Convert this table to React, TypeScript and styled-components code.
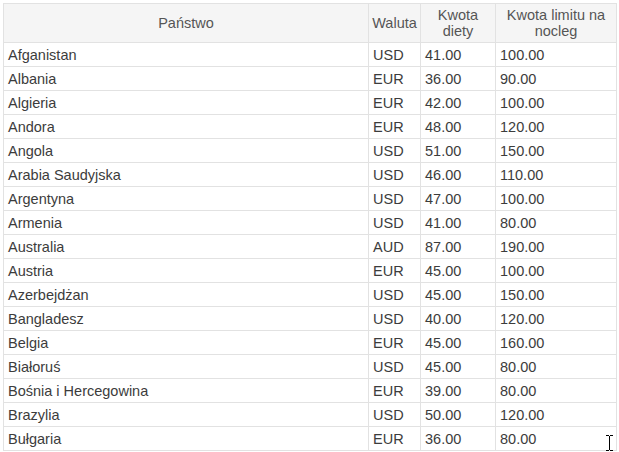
import React from "react";
import styled, { createGlobalStyle } from "styled-components";

const Global = createGlobalStyle`
  html, body { margin: 0; padding: 0; background: #fff; }
  body { font-family: "Liberation Sans", Arial, sans-serif; overflow: hidden; }
`;

const Page = styled.div`
  position: relative;
  padding: 3px 0 0 3px;
  width: 619px;
  height: 452px;
  box-sizing: border-box;
  overflow: hidden;
`;

const Table = styled.table`
  border-collapse: collapse;
  table-layout: fixed;
  width: 613px;
  font-size: 14.5px;
  color: #3c3c3c;
`;

const HeadCell = styled.th<{ $w: number }>`
  width: ${(p) => p.$w}px;
  height: 39px;
  padding: 0 2px;
  background: #f5f5f5;
  border: 1px solid #e2e2e2;
  font-weight: normal;
  color: #555;
  text-align: center;
  vertical-align: middle;
  line-height: 16px;
  box-sizing: border-box;
`;

const Cell = styled.td`
  height: 23px;
  padding: 1px 4px 0 4px;
  box-sizing: border-box;
  border: 1px solid #e2e2e2;
  white-space: nowrap;
  overflow: hidden;
  line-height: 22px;
  color: #3c3c3c;
`;

const Cursor = styled.svg`
  position: absolute;
  left: 605px;
  top: 435px;
`;

const rows: [string, string, string, string][] = [
  ["Afganistan", "USD", "41.00", "100.00"],
  ["Albania", "EUR", "36.00", "90.00"],
  ["Algieria", "EUR", "42.00", "100.00"],
  ["Andora", "EUR", "48.00", "120.00"],
  ["Angola", "USD", "51.00", "150.00"],
  ["Arabia Saudyjska", "USD", "46.00", "110.00"],
  ["Argentyna", "USD", "47.00", "100.00"],
  ["Armenia", "USD", "41.00", "80.00"],
  ["Australia", "AUD", "87.00", "190.00"],
  ["Austria", "EUR", "45.00", "100.00"],
  ["Azerbejdżan", "USD", "45.00", "150.00"],
  ["Bangladesz", "USD", "40.00", "120.00"],
  ["Belgia", "EUR", "45.00", "160.00"],
  ["Białoruś", "USD", "45.00", "80.00"],
  ["Bośnia i Hercegowina", "EUR", "39.00", "80.00"],
  ["Brazylia", "USD", "50.00", "120.00"],
  ["Bułgaria", "EUR", "36.00", "80.00"],
];

export default function App() {
  return (
    <>
      <Global />
      <Page>
        <Table>
          <thead>
            <tr>
              <HeadCell $w={365}>Państwo</HeadCell>
              <HeadCell $w={52}>Waluta</HeadCell>
              <HeadCell $w={75}>Kwota diety</HeadCell>
              <HeadCell $w={121}>Kwota limitu na nocleg</HeadCell>
            </tr>
          </thead>
          <tbody>
            {rows.map((r) => (
              <tr key={r[0]}>
                {r.map((c, i) => (
                  <Cell key={i}>{c}</Cell>
                ))}
              </tr>
            ))}
          </tbody>
        </Table>
        <Cursor width="9" height="16" viewBox="0 0 9 16">
          <path d="M1 0.5h3M5 0.5h3M4.5 1v14M1 15.5h3M5 15.5h3" stroke="#000" strokeWidth="1" fill="none" />
        </Cursor>
      </Page>
    </>
  );
}
